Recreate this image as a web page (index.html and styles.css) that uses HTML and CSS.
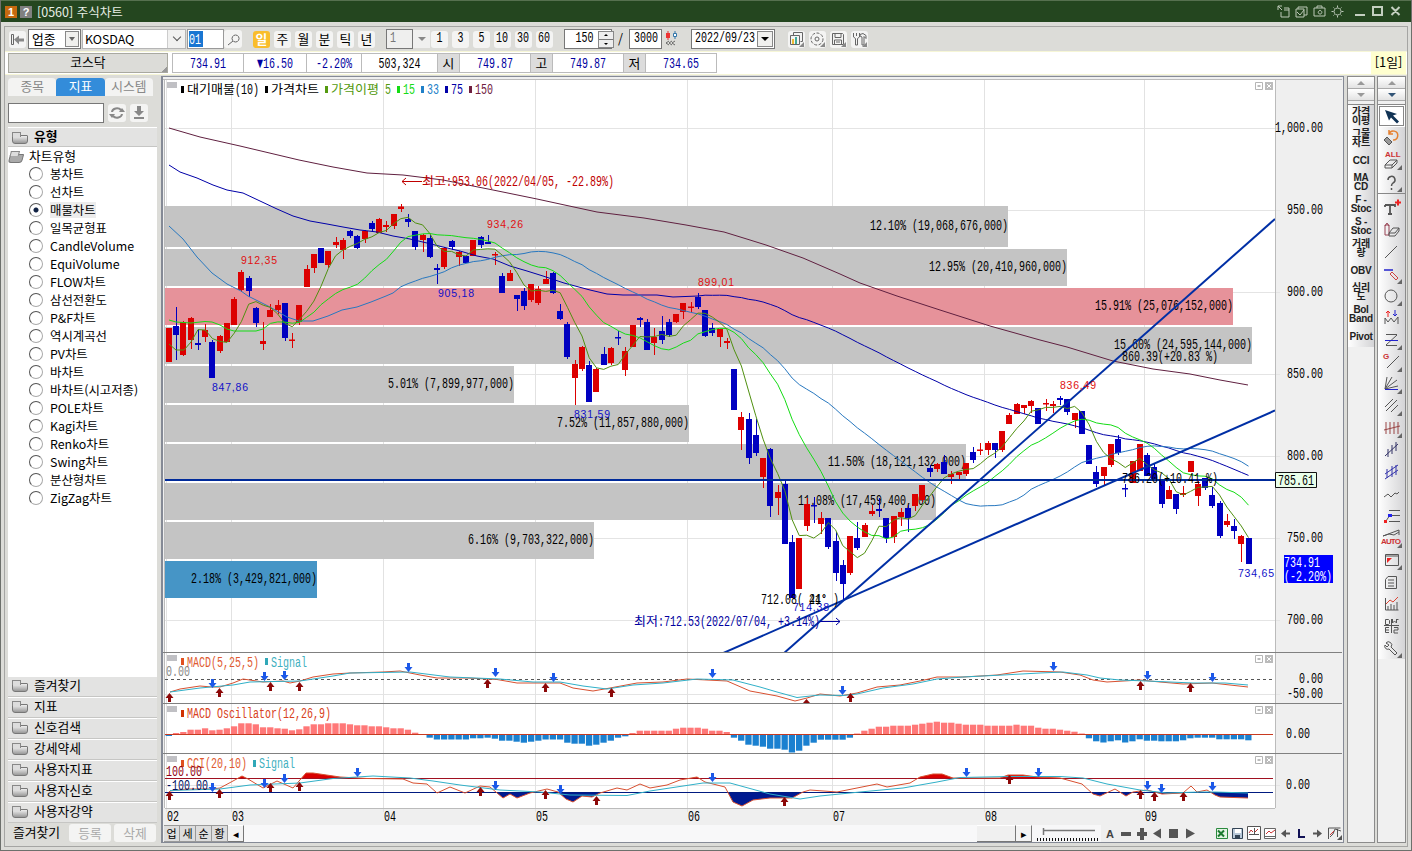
FILE: index.html
```html
<!DOCTYPE html>
<html lang="ko">
<head>
<meta charset="UTF-8">
<title>[0560] 주식차트</title>
<link rel="stylesheet" href="styles.css">
</head>
<body>

<header class="titlebar">
  <span class="badge orange">1</span>
  <span class="badge">?</span>
  <h1>[0560] 주식차트</h1>
  <svg class="win-icons" width="130" height="16" viewBox="1276 4 130 16">
    <path d="M1279 6h4M1279 6v4M1279 6l4 4M1282 12v5h8v-9h-5M1285 10h5"/>
    <path d="M1297 9h8v8h-8zM1299 9v-2h9v8h-3M1298 12l3 3 4-5"/>
    <path d="M1315 8h11v8h-11zM1318 8v-2h5v2M1321 10.5a1.8 1.8 0 1 0 .1 0"/>
    <path d="M1338.500 8a3.500 3.500 0 1 0 .1 0M1338.500 5.500v2M1338.500 15.500v2M1332.500 11.500h2M1342.500 11.500h2M1334.500 7.500l1 1M1341.500 14.500l1 1M1342.500 7.500l-1 1M1335.500 14.500l-1 1"/>
    <path class="thick" d="M1356 15h10M1374 7h9v8h-9zM1392.500 7l8 8M1400.500 7l-8 8"/>
  </svg>
</header>

<div class="frame">

  <div class="toolbar">
    <span class="btn back"><svg width="17" height="17"><path class="ln" d="M2.500 3.500h2v10h-2z"/><path class="gr" d="M5 8.500l5-4v3h5v3h-5v3z"/></svg></span>
    <div class="box kind">업종<i class="drop"></i></div>
    <div class="box market"><span class="name">KOSDAQ</span><i class="arrow"></i></div>
    <div class="box code"><span class="sel"><b class="n left">01</b></span></div>
    <span class="btn find"><svg width="18" height="17"><path class="ln" d="M11.500 4a3.500 3.500 0 1 0 .1 0M9 10l-5 4"/></svg></span>
    <div class="group periods">
      <span class="btn on">일</span><span class="btn">주</span><span class="btn">월</span><span class="btn">분</span><span class="btn">틱</span><span class="btn">년</span>
    </div>
    <div class="box unit"><span class="n left">1</span></div><i class="tri"></i>
    <div class="group minutes">
      <span class="btn"><b class="n">1</b></span><span class="btn"><b class="n">3</b></span><span class="btn"><b class="n">5</b></span><span class="btn"><b class="n">10</b></span><span class="btn"><b class="n">30</b></span><span class="btn"><b class="n">60</b></span>
    </div>
    <div class="box count"><span class="n">150</span><i class="spin"></i></div>
    <span class="slash">/</span>
    <div class="box total"><span class="n">3000</span></div>
    <svg class="mini" width="17" height="18"><path d="M4 1v9" stroke="#d33"/><path d="M2 3h4v5h-4z" fill="#e33"/><path d="M11 1v8" stroke="#37a"/><path d="M9.500 3.500h3v3h-3z" fill="#fff" stroke="#37a"/><path class="ln" d="M5 11l-3 2 3 2M8 11l-3 2 3 2M11 11l-3 2 3 2"/></svg>
    <div class="box date"><span class="n left">2022/09/23</span><i class="drop solid"></i></div>
    <div class="group pics">
      <span class="btn"><svg width="17" height="17"><path class="ln" d="M5.500 4.500v-3h9v9h-2M2.500 4.500h9v9h-9z"/><path d="M4 8h2v5h-2z" fill="#eb3"/><path d="M7 6h2v7h-2z" fill="#4a9"/><path class="gr" d="M16 11v5h-5z"/></svg></span>
      <span class="btn"><svg width="17" height="17"><circle class="ln" cx="8" cy="8" r="6" stroke-dasharray="3 1.500"/><circle class="ln" cx="8" cy="8" r="2"/><path class="gr" d="M16 11v5h-5z"/></svg></span>
      <span class="btn"><svg width="17" height="17"><path class="ln" d="M2.500 2.500h10l1 1v10h-11zM5 2.500v4h6v-4M4.500 13v-4h7v4M6 11h4"/><path class="gr" d="M16 11v5h-5z"/></svg></span>
      <span class="btn"><svg width="17" height="17"><path class="ln" d="M2.500 2v4l2 1.500v6.500h2v-6.500l2-1.500v-4M5.500 2v3M9 3.500l3-1 3 2v3l-2-2v8.500h-2v-8l-2-1z"/><path class="gr" d="M16 11v5h-5z"/></svg></span>
    </div>
  </div>

  <div class="quotes">
    <div class="stock">코스닥</div>
    <div class="cells">
      <span class="w1"><b class="n">734.91</b></span><span class="w2"><b class="n">▼16.50</b></span><span class="w3"><b class="n">-2.20%</b></span><span class="w4"><b class="n">503,324</b></span><em>시</em><span class="w5"><b class="n">749.87</b></span><em>고</em><span class="w5"><b class="n">749.87</b></span><em>저</em><span class="w5"><b class="n">734.65</b></span>
    </div>
    <div class="day">[1일]</div>
  </div>

  <main>
    <aside>
      <div class="tabs"><span>종목</span><span class="on">지표</span><span>시스템</span></div>
      <div class="search">
        <div class="box"></div>
        <span class="btn"><svg width="18" height="18"><path d="M4 8a5 4 0 0 1 9-2M14 10a5 4 0 0 1-9 2" fill="none" stroke="#888" stroke-width="2"/><path class="gr" d="M11 8h6l-3-4zM1 10h6l-3 4z"/></svg></span>
        <span class="btn"><svg width="18" height="18"><path class="gr" d="M7 2h4v5h3l-5 5-5-5h3zM4 13h10v2h-10z"/></svg></span>
      </div>
      <div class="head"><i class="folder"></i>유형</div>
      <div class="tree">
        <div class="root"><i class="folder open"></i>차트유형</div>
        <ul>
          <li>봉차트</li><li>선차트</li><li class="on"><span>매물차트</span></li><li>일목균형표</li><li>CandleVolume</li><li>EquiVolume</li><li>FLOW차트</li><li>삼선전환도</li><li>P&amp;F차트</li><li>역시계곡선</li><li>PV차트</li><li>바차트</li><li>바차트(시고저종)</li><li>POLE차트</li><li>Kagi차트</li><li>Renko차트</li><li>Swing차트</li><li>분산형차트</li><li>ZigZag차트</li>
        </ul>
      </div>
      <div class="fold"><i class="folder"></i>즐겨찾기</div>
      <div class="fold"><i class="folder"></i>지표</div>
      <div class="fold"><i class="folder"></i>신호검색</div>
      <div class="fold"><i class="folder"></i>강세약세</div>
      <div class="fold"><i class="folder"></i>사용자지표</div>
      <div class="fold"><i class="folder"></i>사용자신호</div>
      <div class="fold"><i class="folder"></i>사용자강약</div>
      <div class="favs"><span>즐겨찾기</span><button>등록</button><button>삭제</button></div>
    </aside>

    <section class="chart">
      <svg id="chart" width="1180" height="748" viewBox="163 77 1180 748"></svg>
      <div class="status">
        <div class="types"><span>업</span><span>세</span><span>순</span><span>황</span><span class="go">◂</span></div>
        <div class="track"></div>
        <div class="thumb"></div>
        <div class="go">▸</div>
        <svg width="311" height="18" viewBox="1032 825 311 18">
          <path d="M1032 825h69v18h-69z" fill="#f7f7f8"/>
          <path d="M1043 830.500h52M1043.500 828v7" stroke="#777" stroke-width="1.500"/>
          <path d="M1037 839.500h61" stroke="#111" stroke-width="3" stroke-dasharray="1 2"/>
          <text x="1106" y="838" class="bold">A</text>
          <path class="dk" d="M1121 832h10v4h-10zM1137 832h3v-4h4v4h3v4h-3v4h-4v-4h-3zM1153 833.500l8-5v10zM1169 829h9v9h-9zM1186 828.500l9 5-9 5z"/>
          <path d="M1216.500 828.500h11v10h-11z" fill="#e4f4e4" stroke="#2b8a3e"/><path d="M1218 830.500l6 6M1224 830.500l-6 6" stroke="#1c7a30" stroke-width="2"/>
          <path d="M1232.500 828.500h10v10h-10z" fill="#b8c8d8" stroke="#345"/><path d="M1235 829h6v4h-6z" fill="#fff"/><path d="M1235 835h5v3h-5z" fill="#345"/>
          <path d="M1247.500 826.500h13v13h-13z" fill="#fff" stroke="#555"/><path d="M1254.500 828v6M1249 834.500h10" stroke="#555"/><path d="M1249 833l2-3 2 2M1255 832l3-3" stroke="#b33" fill="none"/>
          <path d="M1264.500 828.500h11v10h-11zM1265 836.500h11" fill="#fff" stroke="#666"/><path d="M1266 834l3-3 2 2 4-3" stroke="#c33" fill="none"/>
          <path class="dk" d="M1281 833.500l5-4v3h4v2h-4v3zM1322 833.500l-5-4v3h-4v2h4v3z"/>
          <path d="M1299 829v8h6" stroke="#115" stroke-width="2" fill="none"/>
          <path d="M1328.500 839v-11h12M1330 837l3-3 2-5 6 2M1337.500 829v8" stroke="#555" fill="none"/><path d="M1330 835l4-4" stroke="#c33"/><path class="dk" d="M1342 835v5h-5z"/>
        </svg>
      </div>
    </section>

    <nav class="rail names">
      <div class="upd"><i></i></div><div class="upd down"><i></i></div>
      <div class="list">
        <span>가격<br>이평</span><span>그물<br>차트</span><span>CCI</span><span>MA<br>CD</span><span>F -<br>Stoc</span><span>S -<br>Stoc</span><span>거래<br>량</span><span>OBV</span><span>심리<br>도</span><span>Bol<br>Band</span><span>Pivot</span>
      </div>
    </nav>

    <nav class="rail tools">
      <div class="upd"><i></i></div><div class="upd down blue"><i></i></div>
      <div class="list" id="tools"></div>
    </nav>
  </main>
</div>

<script src="chart.js"></script>
</body>
</html>
```

FILE: styles.css
```css
* {
  box-sizing: border-box;
}

html, body {
  margin: 0;
  height: 851px;
  overflow: hidden;
}

body {
  display: flex;
  flex-direction: column;
  width: 1412px;
  background: #dcdcd8;
  border: 1px solid #6d706c;
  border-top: 0;
  font: 12.8px/16px "Noto Sans CJK KR", sans-serif;
  color: #000;
}

i, em {
  font-style: normal;
}

/* narrow fixed pitch numbers */
.n {
  display: inline-block;
  font: 15px/16px "Liberation Mono", monospace;
  transform: scaleX(.667);
  white-space: nowrap;
}

.n.left {
  transform-origin: left;
}

.ln { fill: none; stroke: #666; }
.gr { fill: #888; }
.dk { fill: #555; }

/* title bar */
.titlebar {
  display: flex;
  align-items: center;
  height: 22px;
  padding: 0 6px 0 4px;
  background: #24461f;
  border-top: 1px solid #56704f;
}

.titlebar h1 {
  flex: 1;
  margin: 0 0 0 2px;
  font-size: 12.5px;
  font-weight: normal;
  color: #e8efe6;
}

.badge {
  width: 12px;
  height: 12px;
  margin-right: 3px;
  background: #808080;
  color: #fff;
  font: bold 11px/12px "Liberation Sans", sans-serif;
  text-align: center;
}

.badge.orange {
  background: #c66a10;
}

.win-icons path {
  fill: none;
  stroke: #bcc8b8;
}

.win-icons .thick {
  stroke-width: 2;
  stroke: #c4cfc0;
}

/* frame */
.frame {
  display: flex;
  flex-direction: column;
  margin: 4px 3px 0;
  height: 821px;
  border: 1px solid #a5a5a3;
}

.toolbar {
  display: flex;
  align-items: center;
  height: 24px;
  padding-left: 4px;
}

.btn {
  display: flex;
  align-items: center;
  justify-content: center;
  width: 17px;
  height: 17px;
  border-radius: 3px;
  background: #f4f4f3;
}

.btn.on {
  background: #f9bd2c;
  color: #fff;
  font-weight: bold;
}

.box {
  display: flex;
  align-items: center;
  height: 20px;
  background: #fff;
  border: 1px solid #777;
}

.kind { width: 53px; margin-left: 2px; padding-left: 3px; justify-content: space-between; }
.market { width: 104px; margin-left: 1px; padding-left: 2px; border-color: #b5b5b5; }
.name { flex: 1; font-size: 12.4px; }
.code { width: 37px; margin-left: 1px; padding-left: 1px; border-color: #999; }
.sel { width: 14px; height: 16px; background: #1976d2; color: #fff; }
.sel .n { width: 18px; font-weight: normal; }
.find { width: 18px; height: 18px; }

.drop {
  width: 14px;
  height: 16px;
  margin-right: 1px;
  border: 1px solid #888;
  background: #f0f0ee;
}

.drop::after, .tri::after, .upd i::after {
  content: "";
  display: block;
  width: 0;
  margin: 5px auto 0;
  border: 3px solid transparent;
  border-top: 4px solid #666;
  border-bottom: 0;
}

.drop.solid {
  width: 16px;
}

.drop.solid::after {
  border-width: 4px 4px 0;
  border-top-color: #000;
}

.arrow {
  width: 18px;
  height: 18px;
  background: #f1f1f0;
  border-left: 1px solid #ccc;
}

.arrow::after {
  content: "";
  display: block;
  width: 5px;
  height: 5px;
  margin: 4px 0 0 6px;
  border: solid #555;
  border-width: 0 1px 1px 0;
  transform: rotate(45deg);
}

.group {
  display: flex;
  gap: 4px;
}

.btn .n { font-weight: normal; margin: 0 -4px; }
.periods { margin-left: 11px; }
.unit { width: 27px; margin-left: 11px; padding-left: 3px; background: #efefee; color: #777; }
.tri { width: 17px; height: 18px; background: #f0f0ef; }
.tri::after { margin-top: 7px; border-width: 4px 4px 0; border-top-color: #888; }
.minutes { margin-left: 1px; }
.count { width: 48px; margin-left: 11px; padding-left: 6px; }
.spin {
  width: 16px;
  height: 17px;
  margin-left: auto;
  flex: none;
  border: 1px solid #888;
  background: linear-gradient(#eee 7px, #777 7px, #777 8px, #eee 8px);
  position: relative;
}
.spin::before, .spin::after {
  content: "";
  position: absolute;
  left: 5px;
  top: 2px;
  border: 2px solid transparent;
  border-bottom-color: #000;
  border-top: 0;
}
.spin::after {
  top: 11px;
  border-top: 2px solid #000;
  border-bottom: 0;
}
.count .n { width: 27px; }
.slash { width: 17px; text-align: center; }
.total { width: 33px; justify-content: center; }
.mini { margin-left: 2px; }
.date { width: 84px; margin-left: 10px; padding-left: 3px; justify-content: space-between; }
.date .n { width: 62px; }
.date .drop { flex: none; }
.pics { margin-left: 13px; }

/* quotes */
.quotes {
  display: flex;
  height: 24px;
  padding: 1px 1px 0 3px;
  background: #fff;
  border: solid #f6f6d6;
  border-width: 1px 0;
}

.stock {
  width: 160px;
  height: 20px;
  border: 1px solid #a9a9a0;
  background: linear-gradient(135deg, #dcdcd8 97%, #999 97%);
  text-align: center;
  line-height: 16px;
}

.cells {
  display: flex;
  flex: 1;
  height: 20px;
  margin-left: 4px;
  color: #0000a0;
}

.cells span, .cells em {
  border: 1px solid #bbb;
  border-left-width: 0;
  text-align: center;
  line-height: 18px;
}

.cells .n { font-weight: normal; margin: 0 -10px; }
.cells em { width: 22px; background: #dcdcdc; color: #000; }
.cells .w1 { width: 72px; border-left-width: 1px; }
.w2 { width: 63px; }
.w3 { width: 55px; }
.w4 { width: 76px; color: #000; }
.w5 { width: 71px; }

.day {
  width: 35px;
  height: 22px;
  margin-top: -1px;
  background: #ffffcf;
  text-align: center;
  line-height: 19px;
}

main {
  display: flex;
  height: 769px;
  padding-top: 1px;
}

/* left panel */
aside {
  width: 153px;
  margin-left: 3px;
  padding: 2px 4px 0 0;
}

.tabs {
  display: flex;
  height: 18px;
  width: 145px;
  color: #888;
}

.tabs span {
  flex: 1;
  background: #f3f3f2;
  text-align: center;
  border-radius: 4px 4px 0 0;
}

.tabs .on {
  background: #338cda;
  color: #fff;
}

.search {
  display: flex;
  gap: 4px;
  margin-top: 7px;
  height: 24px;
}

.search .box { width: 96px; }
.search .btn { width: 18px; height: 18px; margin-top: 1px; }

.head, .fold {
  display: flex;
  align-items: center;
  background: #e3e3e2;
  border-top: 1px solid #fff;
  border-bottom: 1px solid #c6c6c4;
}

.head { height: 20px; padding: 0 0 2px 4px; font-weight: bold; }
.fold { height: 21px; padding: 0 0 4px 4px; }

.folder {
  position: relative;
  width: 16px;
  height: 9px;
  margin: 6px 6px 0 0;
  border: 1px solid #777;
  border-radius: 1px 1px 3px 3px;
  background: linear-gradient(#eee, #999);
}

.folder::before {
  content: "";
  position: absolute;
  left: -1px;
  top: -4px;
  width: 7px;
  height: 4px;
  border: 1px solid #888;
  border-bottom: 0;
  background: #ddd;
}

.folder.open {
  transform: skewX(-15deg);
  width: 14px;
  margin-top: 4px;
  background: #aaa;
}

.tree {
  height: 529px;
  background: #fff;
}

.root {
  display: flex;
  align-items: center;
  height: 18px;
  padding-left: 1px;
}

.tree ul {
  margin: 0;
  padding: 0;
  list-style: none;
}

.tree li {
  display: flex;
  align-items: center;
  height: 18px;
  padding-left: 21px;
  font-size: 12.4px;
  white-space: nowrap;
}

.tree li::before {
  content: "";
  width: 12px;
  height: 12px;
  margin-right: 7px;
  border: 1px solid #555;
  border-right-color: #aaa;
  border-bottom-color: #aaa;
  border-radius: 50%;
}

.tree .on::before {
  background: radial-gradient(#124 2px, #fff 3px);
}

.tree .on span {
  background: #ececec;
}

.favs {
  display: flex;
  gap: 3px;
  padding: 1px 0 0 5px;
  white-space: nowrap;
}

.favs span { width: 53px; }

.favs button {
  width: 42px;
  height: 18px;
  padding: 0;
  border: 0;
  border-radius: 3px;
  background: #f4f4f3;
  color: #aaa;
  font: inherit;
}

/* chart */
.chart {
  width: 1183px;
  height: 767px;
  border: solid #858a96;
  border-width: 1px 1px 1px 2px;
  background: #efefef;
  overflow: hidden;
}

.chart > svg {
  display: block;
}

#chart text {
  font: 14.5px "Liberation Mono", "Noto Sans CJK KR", monospace;
}

#chart text.ko {
  font: 12.5px "Liberation Mono", "Noto Sans CJK KR", monospace;
}

#chart text.small {
  font: 10.5px "Liberation Sans", sans-serif;
}

.status {
  display: flex;
  height: 18px;
}

.types { display: flex; padding-left: 1px; }

.types span, .go, .thumb {
  width: 16px;
  height: 17px;
  border: 1px solid #999;
  border-width: 1px 1px 1px 0;
  background: #ddd;
  font-size: 11px;
  line-height: 14px;
  text-align: center;
}

.types .go, .go { background: #f3f3f3; border-color: #fff #777 #777 #fff; }
.track { flex: 1; background: #f8f8f9; }
.thumb { width: 39px; background: #f0f0f0; border-color: #fff #777 #777 #fff; }

.bold {
  font: bold 11px "Liberation Sans", sans-serif;
  fill: #444;
}

/* right rails */
.rail {
  width: 28px;
  height: 767px;
  margin-left: 3px;
  border: 1px solid #8b8b8b;
  background: #f0f0f0;
}

.rail.tools { width: 29px; margin-left: 2px; }

.upd {
  height: 12px;
  border-bottom: 1px solid #aaa;
  background: linear-gradient(#fff, #e3e3e3);
}

.upd i::after {
  margin: 0 auto;
  position: relative;
  top: 4px;
  border-width: 4px 4px 0;
  border-top-color: #999;
}

.upd:first-child i::after {
  transform: scaleY(-1);
}

.upd.blue i::after {
  border-top-color: #357;
}

.rail .list {
  margin-top: 3px;
  border-top: 1px solid #888;
  background: linear-gradient(90deg, #fff, #d4d4d6);
}

.names .list span {
  display: flex;
  align-items: center;
  justify-content: center;
  height: 22px;
  font: bold 10px/9px "Liberation Sans", "Noto Sans CJK KR", sans-serif;
  letter-spacing: -.3px;
  text-align: center;
  color: #222;
}

.tools svg {
  display: block;
  width: 27px;
  height: 22px;
  fill: none;
  stroke: #555;
}

.tools .gap {
  height: 4px;
  border-top: 1px solid #888;
}

.tools .picked {
  background: #fff;
  outline: 1px solid #888;
  outline-offset: -2px;
}

.tools svg text {
  font: bold 8px "Liberation Sans", sans-serif;
  fill: #c33;
  stroke: none;
}
```

FILE: chart.js
```js
// candle: color, body top, body bottom, high, low
const candles = `r 328 362;b 326 335 307 360;r 322 355 321 356;r 318 340 317 349;b 343 345 329 350;r 330 337 324 342;b 342 378 340;r 336 351 335 353;r 323 342;r 299 325 297;
r 272 290 270 292;b 278 291 276 297;b 308 323 307 327;r 341 344 322 350;r 310 317 304;r 305 310 300 314;b 303 338 303 341;r 339.500 341 333 348;r 305 322 305 325;r 269 287 265;
r 254 268 254 273;b 248 263;r 251 265 251 268;r 242 245 237 248;r 240 250 238 259;b 231 236 230 238;b 236 248 235 249;r 231 239 230 243;b 223 229 221 232;r 219 233 218;
r 225 227 221 232;r 214 226 214 229;r 206.500 209 204 212;b 219 222 214 227;b 231 247 231 250;r 235 240 234 252;b 238 257 235 258;b 268 270 264 284;r 248 267 247 269;b 241 247 240 250;
r 252 257 251 266;b 256 263;r 240 256;b 237 245 236 248;b 242 244 235;r 254 255.500 252 265;b 276 293 273;r 273 281 270;b 295 299 295 311;b 291 306 288 310;
r 284 300 284 302;r 289 303 286 305;r 279 284 271;b 273 293 272 294;b 311 319 304 320;b 324 357 322 359;r 364 378 360 405;r 347 369 346 371;b 365 402 361;r 369 392 368;
b 354 365 347;r 348 363 347 365;b 337 338.500 331 345;r 351 370 347 376;r 325 347;b 318 320 317 327;b 322 350 319;r 337 343 328 355;b 331 340 316 344;b 322 335 319 337;
r 314 322 314 323;r 303 312 303 319;r 306.500 308 302 313;b 297 307 293 309;b 310 336 310 337;b 328 333 323 336;r 329 337 329 347;r 341 343 338 349;b 369 410;r 417 430 412 450;
b 419 458 413 464;b 435 453 419 456;r 458 477 458 488;b 449 506 448 517;r 492 498 485 515;b 484 544 481;b 542 598 535;r 538 589;r 504 526 498 531;b 505 506.500 497 523;
r 518 524 512 534;b 518 547 518 549;b 541 573 532 581;b 565 584 560 600;r 536 573 536 575;b 538 548 522 550;r 525 537 523;r 511 514 505 516;b 509 511 498 517;b 518 538 518 543;
r 516 537 516 543;r 512 517 508 526;b 508 518 505 532;r 494 506 494 511;r 485 500 485 502;b 468 472 465 477;r 464 469 463 472;b 462 474 455;r 474 477 471 484;r 472 475 472 479;
r 463 474 463 476;b 452 460 447 463;r 449.500 451 443 455;r 443 450 441 455;b 443 450 443 458;r 431 450 431 452;r 415 424 413;r 404 414 403;r 405 408 405 414;r 401 406 400 413;
b 408 424;r 403 404.500 399 411;r 404 406 401 413;b 398 400 396 405;b 399 412 399 415;r 413 420 413 428;b 411 434;b 445 464;b 472 484 466 487;r 467 476 467 485;
r 444 465 444 467;b 439 453 435 455;b 488 489.500 484 497;r 461 483;r 444 471;b 455 476 453;b 467 479 463;b 480 504 480 508;r 490 499 486;b 494 509 494 514;
r 493 495 486 497;r 461 472;r 484 496 480 506;b 478 488 478 490;b 495 506 487 508;b 503 536 501 538;r 521 525 514 527;b 526 531 519 539;r 536 544 535 562;b 538 564`
  .split(';').map(s => {
    const p = s.trim().split(' ');
    const v = p.slice(1).map(Number);
    return { c: p[0], top: v[0], bot: v[1], hi: v[2] || v[0], lo: v[3] || v[1] };
  });

const osc = [-1,1,2,4.3,4.3,5.7,3.7,4.3,5.7,7.7,10.7,10.7,9.7,6.7,6.7,5.7,5.3,3.7,4.7,7.7,9.7,9.7,10.7,10.7,10.7,9.7,8.7,8.7,7.7,7.7,
  6.7,5.7,5.7,4.3,1.3,0,-2.7,-4.5,-4.5,-4.5,-4.5,-4.5,-3.3,-3.3,-2.7,-3.7,-5.7,-5.7,-6.7,-7.7,-6.7,-5.7,-4.5,-4.5,-4.5,-7.7,-8.7,-8.7,-10.7,-9.7,
  -7.7,-5.7,-2.7,-1.3,1,3.3,3.3,3.3,3.3,3.3,5.3,6.3,6.3,6.3,5.3,3.3,3.3,2,-2.7,-5.7,-9.7,-10.7,-11.7,-13.7,-13.7,-14.7,-17.5,-15.7,-10.7,-7.7,
  -4.7,-4.7,-4.7,-4.7,-2.7,0.5,3.3,5.3,7.3,7.3,8.3,8.3,8.3,9.3,10.3,11.3,12.3,11.3,11.3,10.3,9.3,9.3,9.3,8.3,8.3,8.3,8.3,9.3,8.3,8.3,
  6.3,5.3,5.3,4.3,3.3,2.3,0.5,-3.3,-6.3,-7.5,-6.3,-5.3,-7.5,-6.3,-4.3,-5.7,-5.7,-6.3,-6.3,-6.3,-5.3,-3.3,-2.7,-2.7,-2.7,-4.3,-4.3,-4.3,-4.3,-5.3];

const px = i => 169 + i * 7.245;
let out = '';

function rect(x, y, w, h, fill) {
  out += `<rect x="${x}" y="${y}" width="${w}" height="${h}" fill="${fill}"/>`;
}
function line(x1, y1, x2, y2, color, w = 1, extra = '') {
  out += `<path d="M${x1} ${y1}L${x2} ${y2}" stroke="${color}" stroke-width="${w}" ${extra}/>`;
}
function poly(points, color) {
  out += `<polyline points="${points}" fill="none" stroke="${color}"/>`;
}
// 6px per latin character, 12px per hangul
function text(x, y, str, color = '#000', right = false) {
  let w = 0;
  for (const ch of str) w += ch > '\u1100' ? 12 : 6;
  if (right) x -= w;
  const cls = /^[\uac00-\ud7a3]+/.test(str) ? ' class="ko"' : '';
  out += `<text${cls} x="${x}" y="${y}" textLength="${w}" lengthAdjust="spacingAndGlyphs" fill="${color}">${str}</text>`;
}
function small(x, y, str, color) {
  out += `<text class="small" x="${x}" y="${y}" textLength="36" fill="${color}">${str}</text>`;
}
function average(n, prefix) {
  const pts = [prefix];
  for (let i = n - 1; i < 150; i++) {
    let sum = 0;
    for (let k = i - n + 1; k <= i; k++) sum += candles[k].c == 'r' ? candles[k].top : candles[k].bot;
    pts.push(px(i).toFixed(1) + ',' + (sum / n).toFixed(1));
  }
  return pts.join(' ');
}

// panes
rect(165, 79, 1110, 729, '#fff');
for (const y of [128, 210, 292, 374, 456, 538, 620, 694]) line(165, y + .5, 1280, y + .5, '#e4e4e4');
line(165, 785.5, 1280, 785.5, '#e4e4e4');
for (const x of [166, 231, 383, 535, 687, 832, 984, 1144]) line(x + .5, 79, x + .5, 812, '#e2e2e2');
line(163, 79.5, 1342, 79.5, '#bbb');
line(1275.5, 79, 1275.5, 808, '#bbb');
line(164.5, 79, 164.5, 808, '#bbb');

// volume by price
[[1008, '12.10% (19,068,676,000)'], [1067, '12.95% (20,410,960,000)'], [1233, '15.91% (25,076,152,000)'], [1252, '15.60% (24,595,144,000)'],
 [514, '5.01% (7,899,977,000)'], [689, '7.52% (11,857,880,000)'], [966, '11.50% (18,121,132,000)'], [936, '11.08% (17,459,400,000)'],
 [594, '6.16% (9,703,322,000)'], [317, '2.18% (3,429,821,000)']].forEach(([x, label], i) => {
  const y = i ? 210 + i * 39 : 206;
  rect(165, y, x - 165, i ? 37 : 41, i == 2 ? '#e6929a' : i == 9 ? '#4695c6' : '#c4c4c4');
  text(x, i ? y + 22 : y + 24, label, '#000', true);
});

candles.forEach((k, i) => {
  const color = k.c == 'r' ? '#dc0000' : '#0000c0';
  const x = Math.round(px(i));
  rect(x, k.hi, 1, k.lo - k.hi, color);
  rect(x - 3, k.top, 6, k.bot - k.top, color);
});

poly('169,128 200,137 240,146 299,160 333,167 367,173 403,175 443,180 493,190 537,199 560,204 597,212 644,218 686,225 724,232 750,240 766,245 803,258 840,274 860,283 897,296 940,310 990,326 1040,340 1067,347 1113,361 1153,369 1190,374 1220,380 1248,385', '#602040');
poly(average(75, '169,165 180,172 197,178 213,185 227,190 243,193 260,201 277,209 293,216 310,221 327,224 343,227 360,230 377,232 393,236 410,239 427,243 443,247 460,251 477,256 493,259 510,266 527,271 543,276 564,283 590,290 607,294 623,295 657,295 673,297 698,296'), '#0000a8');
poly(average(33, '169,226 183,239 197,257 212,273 227,284 241,291 248,296 270,307 287,317 299,321 313,321 328,316 342,310 357,307 371,302 386,296 393,293'), '#2878c0');
poly(average(15, '169,320 176,322 191,323 205,321.5 212,322 220,325 227,329 234,331 256,331 263,329'), '#14dc14');
poly(average(5, '169,344 176,350 184,350 191,342'), '#509010');

out += '<clipPath id="main"><path d="M165 79h1110v573h-1110z"/></clipPath><g clip-path="url(#main)">';
line(165, 480, 1275, 480, '#002a9a', 2);
line(783, 654, 1275, 219, '#002fa5', 2);
line(721, 654, 1275, 410.5, '#002fa5', 2);
out += '</g>';

small(241, 264, '912,35', '#e01010');
small(487, 228, '934,26', '#e01010');
small(698, 286, '899,01', '#e01010');
small(1060, 389, '836,49', '#e01010');
small(212, 391, '847,86', '#1010c8');
small(438, 297, '905,18', '#1010c8');
small(574, 418, '831,59', '#1010c8');
small(793, 611, '714,38', '#1010c8');
small(1238, 577, '734,65', '#1010c8');
text(422, 185.5, '최고', '#c00000');
text(446, 185.5, ':953.06(2022/04/05, -22.89%)', '#c00000');
line(402, 181.5, 422, 181.5, '#c00000');
out += '<path d="M406 178l-4 3.5 4 3.5" fill="none" stroke="#c00000"/>';
text(634, 625.5, '최저', '#0000a0');
text(658, 625.5, ':712.53(2022/07/04, +3.14%)', '#0000a0');
line(820, 621.5, 840, 621.5, '#0000a0');
out += '<path d="M836 618l4 3.5-4 3.500" fill="none" stroke="#0000a0"/>';
text(761, 604, '712.08( 24° )');
text(809, 604, '41°');
text(1122, 360.5, '860.39(+20.83 %)');
text(1122, 482.5, '786.20(+10.41 %)');

// legend
function mark(x, y, color) { rect(x, y, 3, 7, color); }
[[181, '대기매물', '#000'], [265, '가격차트', '#000'], [325, '가격이평', '#549a10'], [397, '15', '#14dc14'], [421, '33', '#2080c8'], [445, '75', '#0000a8'], [469, '150', '#702040']].forEach(([x, s, c]) => {
  mark(x, 86, c);
  text(x + 6, 94, s, c);
});
text(235, 94, '(10)');
text(385, 94, '5', '#549a10');
function head(y) {
  rect(167, y, 10, 6, '#c0c0c4');
  out += `<path d="M1255.5 ${y + .5}h7v7h-7z" fill="none" stroke="#b5b5b5"/><path d="M1257.500 ${y + 3}h3v2h-3zM1265 ${y}h8v8h-8z" fill="#bbb"/><path d="M1267 ${y + 2}l4 4m0-4l-4 4" stroke="#fff"/>`;
}
[82, 655, 706, 756].forEach(head);

// MACD
text(166, 676, '0.00', '#888');
mark(181, 658, '#e05020'); text(187, 667, 'MACD(5,25,5)', '#e05a30');
mark(265, 658, '#30a8b8'); text(271, 667, 'Signal', '#40b0c0');
line(165, 679.5, 1275, 679.5, '#555', 1, 'stroke-dasharray="3 3"');
poly('170,692 180,689 200,686 212,687 220,687 233,683 243,679 263,682 283,681 290,683 300,681 313,677 333,674 350,673 383,672 400,671 410,673 420,675 437,678 467,678 497,679.5 517,683 547,683 560,683 573,688 593,691 610,688 637,683 663,682 687,679 727,681 750,691 777,696 795,701 807,698 820,694 840,696 857,693 877,687 900,685 920,681 937,677 963,677 997,675 1023,671 1060,672 1080,675 1093,680 1107,682 1140,680 1160,682 1183,684 1212,683 1230,685 1248,687', '#d85030');
poly('170,692 200,688 233,685 250,682 300,681 333,676 350,673 410,672 450,677 500,679 533,682 560,682 583,686 607,689 633,685 663,683 697,679 733,680 760,687 777,692 797,697.5 820,695 843,695.5 857,694 883,688 913,684 937,679 963,677 1003,675 1040,673 1063,672 1087,675 1100,678 1120,680 1147,681 1193,683 1225,683 1248,685', '#30b0c8');

// oscillator
mark(181, 710, '#d03000'); text(187, 718, 'MACD Oscillator(12,26,9)', '#d84020');
line(165, 734.5, 1273, 734.5, '#c83a20');
osc.forEach((v, i) => rect(px(i) - 3.3, v > 0 ? 734 - v : 735, 6.3, Math.abs(v), v > 0 ? '#ff7878' : '#1a80d0'));

// CCI
const cci = '170,791 187,789 212,789 220,788 233,781 242,776 248,779 263,788 277,781 293,788 306,773 313,773 340,777 367,778.5 403,779 413,783 427,784 437,793 450,787 465,793 480,786 490,787 503,798 510,794 517,798 530,793 547,789 558,792 566,799 573,802 582,796 592,797 600,793 617,788 627,790 640,784 650,788 667,785 680,780 697,777 705,782 725,787 733,802 742,806 753,800 770,798 792,798 803,792 810,790 837,792 857,788 877,784 887,787 910,783 920,777 933,774 942,774 953,778 1000,778 1008,775 1023,775 1037,777 1060,778 1082,784 1093,794 1100,796 1115,789 1126,796 1133,792 1147,790 1162,794 1183,793 1191,786 1197,792 1207,790 1215,795 1220,797 1248,798';
out += `<clipPath id="over"><path d="M165 760h1110v18.500h-1110z"/></clipPath><clipPath id="under"><path d="M165 792.500h1110v15h-1110z"/></clipPath>
<polygon points="170,778.5 ${cci} 1248,778.5" fill="#d80000" clip-path="url(#over)"/>
<polygon points="170,792.5 ${cci} 1248,792.5" fill="#001a90" clip-path="url(#under)"/>`;
line(165, 778.5, 1273, 778.5, '#a01020');
line(165, 792.5, 1273, 792.5, '#001a80');
poly(cci, '#d85030');
poly('170,790.5 220,789 250,785 300,783 333,778.5 373,776 410,778 433,781 460,785 500,790 540,792 570,795 627,795.5 650,791 703,783 730,783 770,794 800,799 820,796 860,792 903,788 937,782 960,777.5 1010,776.5 1060,776.5 1083,778 1107,784 1140,790 1167,793 1200,792 1215,792 1248,793', '#30b0c8');
mark(181, 760, '#e05020'); text(187, 768, 'CCI(20,10)', '#e05a30');
mark(253, 760, '#30a8b8'); text(259, 768, 'Signal', '#40b0c0');
text(166, 776, '100.00', '#900010');
text(166, 790, '-100.00', '#001060');

// signals
const arrow = (x, y, up) => {
  const d = up ? -1 : 1;
  out += `<path d="M${x - 1.5} ${y - 4 * d}h3v${4 * d}h2.500l-4 ${5 * d}-4 ${-5 * d}h2.500z" fill="${up ? '#8c0808' : '#1c58e8'}"/>`;
};
[[212,683],[264,676],[284,675],[408,667],[495,672],[553,677],[712,673],[842,690],[1053,666],[1147,675],[1212,677],
 [212,787],[264,783],[284,778],[357,772],[495,785],[560,789],[712,777],[966,772],[1038,772],[1147,785],[1161,788],[1212,786]].forEach(p => arrow(p[0] + .5, p[1]));
[[169,698],[219,693],[270,687],[299,687],[487,684],[545,688],[611,693],[850,698],[1140,686],[1190,688],
 [169,796],[219,794],[270,788],[299,787],[480,792],[545,795],[596,801],[784,802],[1009,780],[1140,795],[1154,797],[1183,797]].forEach(p => arrow(p[0] + .5, p[1], true));
out += '<path d="M803 703l3.500-4 3.500 4z" fill="#8c0808"/>';

for (const y of [652, 703, 753]) line(163, y + .5, 1342, y + .5, '#808080');
line(165, 808.5, 1275, 808.5, '#bbb');

// axes
['1,000.00', '950.00', '900.00', '850.00', '800.00', '750.00', '700.00'].forEach((s, i) => text(1323, 132 + i * 82, s, '#000', true));
text(1323, 683, '0.00', '#000', true);
text(1323, 698, '-50.00', '#000', true);
text(1286, 738, '0.00');
text(1286, 789, '0.00');
out += '<path d="M1275.500 472.500h41v15h-41z" fill="#eaffea" stroke="#111"/>';
text(1278, 485, '785.61');
rect(1284, 555, 49, 28, '#0000ff');
text(1284, 567, '734.91', '#fff');
text(1284, 581, '(-2.20%)', '#fff');
[[167, '02'], [232, '03'], [384, '04'], [536, '05'], [688, '06'], [833, '07'], [985, '08'], [1145, '09']].forEach(([x, s]) => text(x, 820.5, s));

document.querySelector('#chart').innerHTML = out;

// drawing tools
const corner = '<path d="M24 16v5h-5z" fill="#666" stroke="none"/>';
const tools = [
  '<path d="M7 5l12 4-4 1.500 6 6-2 2-6-6-2 3z" fill="#135" stroke="none"/>',
  '<path d="M6 13l5 5 3-3-5-5z" fill="#999"/><path d="M11 7a4.500 4.500 0 1 1 4 6M11 3v4h4" stroke="#e58030" stroke-width="1.500"/>',
  '<text x="7" y="8">ALL</text><path d="M7 16l5-5h7l-5 5zM7 16v3h7l5-5v-3M14 16v3"/>' + corner,
  '<path d="M10 9a3.500 3.500 0 1 1 5 3q-1.500 1-1.500 3M13.500 17v2" stroke-width="1.500"/>' + corner,
  'gap',
  '<path d="M7 8h10v2M7 8v2M12 8v9M10 17h4" stroke-width="1.800"/><path d="M17 5.500h6M20 2.500v6" stroke="#e22" stroke-width="2"/>',
  '<path d="M7 6h4v10h-4zM7 7l2-3 2 3" stroke="#945"/><path d="M11 14l4-5h6l-4 5zM11 14v3h6l4-5v-3"/>',
  '<path d="M7 17l12-12"/>',
  '<path d="M6 7h9" stroke="#22c" stroke-width="1.500"/><path d="M12 11l2-2 6 6-2 2z" stroke="#c44"/>' + corner,
  '<circle cx="13" cy="11" r="6"/>' + corner,
  '<path d="M7 17v-6l3 4 3-4 3 4 4-5v7"/><path d="M10 10v-6M8 6l2-2 2 2" stroke="#e22"/><path d="M17 3v6M15 7l2 2 2-2" stroke="#22c"/>',
  '<path d="M8 5.500h11M8 16.500h11M19 6l-11 10"/><path d="M7 11.500h13" stroke="#22c"/>' + corner,
  '<text x="5" y="8">G</text><path d="M9 17l12-12"/>' + corner,
  '<path d="M7 16l2-12M7 16l7-12M7 16l12-9M7 16l13-3"/><path d="M7 16.500h13" stroke="#22c"/>' + corner,
  '<path d="M7 12l8-8M8 16l11-11M13 17l7-7"/>' + corner,
  '<path d="M8 5v12M12 5v12M16 5v12M20 5v12M6 13l16-4" stroke="#944"/>' + corner,
  '<path d="M7 17l13-12M10 10v8M14 6v9M18 3v9" stroke="#336"/>',
  '<path d="M7 13l13-9M7 18l13-9M9 8v9M14 5v11M18 4v10" stroke="#33a"/>',
  '<path d="M6 14l4-3 3 3 4-4 2 1 2-2"/>',
  '<path d="M11 5.500h11M11 10.500h11M11 16.500h11"/><path d="M8 16l4-6"/><path d="M10 9h4v3h-4z" fill="#22e" stroke="none"/><path d="M6 15h3v3h-3z" fill="#e22" stroke="none"/>',
  '<path d="M5 9l16-6v5M5 9l6-2 5 1 5-3"/><text x="3" y="17" textLength="20">AUTO</text>' + corner,
  '<path d="M7.500 5.500h13v11h-13zM7 7h14"/><path d="M9 9h5l-5 5z" fill="#e22" stroke="none"/>' + corner,
  '<path d="M10 5.500h8.500v12h-11v-9zM10 9h6M10 12h6M10 15h6"/>',
  '<path d="M7.500 5v12h13M10 17v-4M13 17v-6M16 17v-5M19 17v-8"/><path d="M8 11l4-4 3 2 5-5" stroke="#d43"/>',
  '<path d="M7.500 4.500h3l1 1v3l-1 1h-3zM14.500 4v4l2-2 2 2v-4M20.500 4.500h-2M13.500 4v14M11 12.500h-3.500v5h3.500M8 15h3M16 12.500h4v2.500h-4v3h4M6 10.500h15"/>',
  '<path d="M8 6a3 3 0 0 1 5 4l6 6-2 2-6-6a3 3 0 0 1-4-4l2 2 2-2z"/>' + corner
];
document.querySelector('#tools').innerHTML = tools.map((t, i) =>
  t == 'gap' ? '<div class="gap"></div>' : `<svg class="${i ? '' : 'picked'}" viewBox="0 0 27 22">${t}</svg>`).join('');
```
